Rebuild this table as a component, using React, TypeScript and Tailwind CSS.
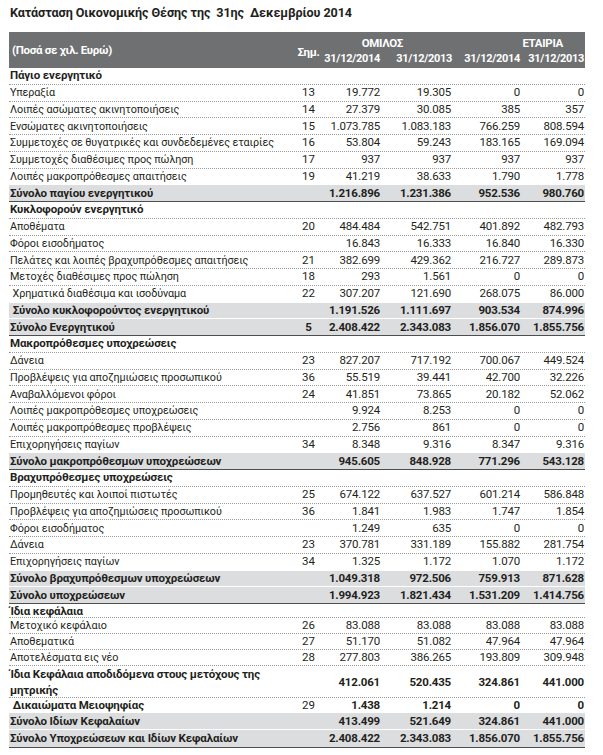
import React from "react";

type Row = {
  t: "section" | "item" | "total" | "bolditem" | "double";
  l: string;
  l2?: string;
  n?: string;
  v?: string[];
  h?: string;
};

const rows: Row[] = [
  { t: "section", l: "Πάγιο ενεργητικό" },
  { t: "item", l: "Υπεραξία", n: "13", v: ["19.772", "19.305", "0", "0"] },
  { t: "item", l: "Λοιπές ασώματες ακινητοποιήσεις", n: "14", v: ["27.379", "30.085", "385", "357"] },
  { t: "item", l: "Ενσώματες ακινητοποιήσεις", n: "15", v: ["1.073.785", "1.083.183", "766.259", "808.594"] },
  { t: "item", l: "Συμμετοχές σε θυγατρικές και συνδεδεμένες εταιρίες", n: "16", v: ["53.804", "59.243", "183.165", "169.094"] },
  { t: "item", l: "Συμμετοχές διαθέσιμες προς πώληση", n: "17", v: ["937", "937", "937", "937"] },
  { t: "item", l: "Λοιπές μακροπρόθεσμες απαιτήσεις", n: "19", v: ["41.219", "38.633", "1.790", "1.778"] },
  { t: "total", l: "Σύνολο παγίου ενεργητικού", v: ["1.216.896", "1.231.386", "952.536", "980.760"] },
  { t: "section", l: "Κυκλοφορούν ενεργητικό" },
  { t: "item", l: "Αποθέματα", n: "20", v: ["484.484", "542.751", "401.892", "482.793"] },
  { t: "item", l: "Φόροι εισοδήματος", v: ["16.843", "16.333", "16.840", "16.330"] },
  { t: "item", l: "Πελάτες και λοιπές βραχυπρόθεσμες απαιτήσεις", n: "21", v: ["382.699", "429.362", "216.727", "289.873"] },
  { t: "item", l: "Μετοχές διαθέσιμες προς πώληση", n: "18", v: ["293", "1.561", "0", "0"] },
  { t: "item", l: " Χρηματικά διαθέσιμα και ισοδύναμα", n: "22", v: ["307.207", "121.690", "268.075", "86.000"] },
  { t: "total", l: " Σύνολο κυκλοφορούντος ενεργητικού", v: ["1.191.526", "1.111.697", "903.534", "874.996"] },
  { t: "total", l: "Σύνολο Ενεργητικού", n: "5", v: ["2.408.422", "2.343.083", "1.856.070", "1.855.756"] },
  { t: "section", l: "Μακροπρόθεσμες υποχρεώσεις" },
  { t: "item", l: "Δάνεια", n: "23", v: ["827.207", "717.192", "700.067", "449.524"] },
  { t: "item", l: "Προβλέψεις για αποζημιώσεις προσωπικού", n: "36", v: ["55.519", "39.441", "42.700", "32.226"] },
  { t: "item", l: "Αναβαλλόμενοι φόροι", n: "24", v: ["41.851", "73.865", "20.182", "52.062"] },
  { t: "item", l: "Λοιπές μακροπρόθεσμες υποχρεώσεις", v: ["9.924", "8.253", "0", "0"] },
  { t: "item", l: "Λοιπές μακροπρόθεσμες προβλέψεις", v: ["2.756", "861", "0", "0"] },
  { t: "item", l: "Επιχορηγήσεις παγίων", n: "34", v: ["8.348", "9.316", "8.347", "9.316"] },
  { t: "total", l: "Σύνολο μακροπρόθεσμων υποχρεώσεων", v: ["945.605", "848.928", "771.296", "543.128"] },
  { t: "section", l: "Βραχυπρόθεσμες υποχρεώσεις" },
  { t: "item", l: "Προμηθευτές και λοιποί πιστωτές", n: "25", v: ["674.122", "637.527", "601.214", "586.848"] },
  { t: "item", l: "Προβλέψεις για αποζημιώσεις προσωπικού", n: "36", v: ["1.841", "1.983", "1.747", "1.854"] },
  { t: "item", l: "Φόροι εισοδήματος", v: ["1.249", "635", "0", "0"] },
  { t: "item", l: "Δάνεια", n: "23", v: ["370.781", "331.189", "155.882", "281.754"] },
  { t: "item", l: "Επιχορηγήσεις παγίων", n: "34", v: ["1.325", "1.172", "1.070", "1.172"] },
  { t: "total", l: "Σύνολο βραχυπρόθεσμων υποχρεώσεων", v: ["1.049.318", "972.506", "759.913", "871.628"] },
  { t: "total", l: "Σύνολο υποχρεώσεων", v: ["1.994.923", "1.821.434", "1.531.209", "1.414.756"] },
  { t: "section", l: "Ίδια κεφάλαια", h: "h-[14px]" },
  { t: "item", l: "Μετοχικό κεφάλαιο", n: "26", v: ["83.088", "83.088", "83.088", "83.088"], h: "h-[16px]" },
  { t: "item", l: "Αποθεματικά", n: "27", v: ["51.170", "51.082", "47.964", "47.964"], h: "h-[16px]" },
  { t: "item", l: "Αποτελέσματα εις νέο", n: "28", v: ["277.803", "386.265", "193.809", "309.948"], h: "h-[16px]" },
  { t: "double", l: "Ίδια Κεφάλαια αποδιδόμενα στους μετόχους της", l2: "μητρικής", v: ["412.061", "520.435", "324.861", "441.000"], h: "h-[32px]" },
  { t: "bolditem", l: " Δικαιώματα Μειοψηφίας", n: "29", v: ["1.438", "1.214", "0", "0"], h: "h-[15px]" },
  { t: "total", l: "Σύνολο Ιδίων Κεφαλαίων", v: ["413.499", "521.649", "324.861", "441.000"], h: "h-[17px]" },
  { t: "total", l: "Σύνολο Υποχρεώσεων και Ιδίων Κεφαλαίων", v: ["2.408.422", "2.343.083", "1.856.070", "1.855.756"], h: "h-[18px]" },
];

const grid = "grid grid-cols-[279px_40px_53px_71px_69px_64px]";

export default function App() {
  return (
    <div
      className="w-[603px] h-[755px] bg-white text-[#231f20] overflow-hidden"
      style={{ fontFamily: "Roboto, 'Noto Sans', sans-serif" }}
    >
      <div className="pl-[10px] pt-[5px] h-[32px] text-[12.6px] leading-[16px] font-bold tracking-[-0.1px] whitespace-pre">
        {"Κατάσταση Οικονομικής Θέσης της  31ης  Δεκεμβρίου 2014"}
      </div>
      <div className="ml-[9px] w-[576px]">
        <div className={`${grid} h-[36px] bg-[#6f7072] text-white font-bold text-[11px] tracking-[-0.3px]`}>
          <div className="row-span-2 flex items-center pl-[3px] pt-[1px] text-[11.5px]">(Ποσά σε χιλ. Ευρώ)</div>
          <div className="row-span-2 flex items-center justify-center pt-[5px] pl-[1px] text-[11.5px]">Σημ.</div>
          <div className="col-span-2 flex items-end justify-end pr-[49px] leading-[14px] pt-[3px] text-[11.5px]">ΟΜΙΛΟΣ</div>
          <div className="col-span-2 flex items-end justify-end pr-[22px] leading-[14px] pt-[3px] text-[11.5px]">ΕΤΑΙΡΙΑ</div>
          <div className="col-start-3 flex items-center justify-end pr-[1px]">31/12/2014</div>
          <div className="flex items-center justify-end">31/12/2013</div>
          <div className="flex items-center justify-end pr-[1px]">31/12/2014</div>
          <div className="flex items-center justify-end pr-[1px]">31/12/2013</div>
        </div>
        {rows.map((r, i) => {
          const next = rows[i + 1];
          const isTotal = r.t === "total";
          const nextTotal = next ? next.t === "total" : false;
          let border = "border-b border-dotted border-[#9a9b9d]";
          if (isTotal) {
            border = nextTotal
              ? "border-b border-solid border-white"
              : "border-b border-solid border-[#4d4e50]";
          } else if (nextTotal) {
            border = "border-b border-solid border-transparent";
          }
          const bold = r.t !== "item";
          const h = r.h ?? "h-[16.75px]";
          return (
            <div
              key={i}
              className={`${grid} ${h} ${border} ${isTotal ? "bg-[#dcdddf]" : ""} text-[11.5px] leading-[15px] ${bold ? "font-bold" : "font-normal"}`}
            >
              <div
                className={`flex flex-col justify-center pl-[1px] whitespace-pre ${
                  bold ? "tracking-[-0.15px]" : "text-[10.8px] tracking-[-0.1px]"
                }`}
              >
                {r.t === "double" ? (
                  <>
                    <span className="leading-[17px]">{r.l}</span>
                    <span className="leading-[15px]">{r.l2}</span>
                  </>
                ) : (
                  <span>{r.l}</span>
                )}
              </div>
              <div className={`flex items-center justify-center pl-[1px] ${r.t === "bolditem" ? "font-normal" : ""}`}>
                {r.n ?? ""}
              </div>
              {(r.v ?? ["", "", "", ""]).map((v, j) => (
                <div key={j} className="flex items-center justify-end pr-[1px] tracking-[-0.2px]">
                  {v}
                </div>
              ))}
            </div>
          );
        })}
      </div>
    </div>
  );
}
